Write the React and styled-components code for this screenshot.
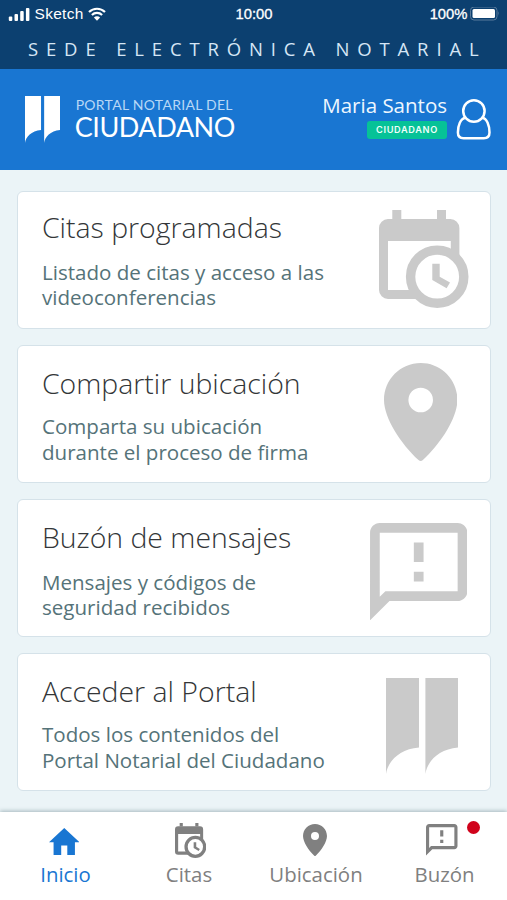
import React from "react";
import styled, { createGlobalStyle } from "styled-components";

const GlobalStyle = createGlobalStyle`
  * { box-sizing: border-box; }
  body { margin: 0; background: #ebf4f7; font-family: "Open Sans", "Noto Sans", sans-serif; }
`;

const Screen = styled.div`
  width: 507px;
  height: 900px;
  display: flex;
  flex-direction: column;
  overflow: hidden;
  background: #ebf4f7;
`;

const TopBar = styled.div`
  height: 69px;
  flex: none;
  background: #0c4070;
  color: #fff;
`;

const StatusBar = styled.div`
  height: 28px;
  display: grid;
  grid-template-columns: 1fr auto 1fr;
  align-items: center;
  padding: 0 7px 0 8px;
  font: 15.5px/28px "Liberation Sans", Arial, sans-serif;
`;

const StatusGroup = styled.div`
  display: flex;
  align-items: center;
  justify-content: ${(p) => (p.$end ? "flex-end" : "flex-start")};
  gap: ${(p) => (p.$end ? "2.5px" : "4.5px")};
  svg { display: block; flex: none; }
`;

const StatusText = styled.span`
  font-size: ${(p) => (p.$strong ? "14.8px" : "15.5px")};
  letter-spacing: ${(p) => p.$track || "0"};
  -webkit-text-stroke: ${(p) => (p.$strong ? "0.3px #fff" : "0")};
`;

const SiteTitle = styled.div`
  padding: 8px 0 0 28px;
  font-size: 18.5px;
  line-height: 26px;
  letter-spacing: 7.85px;
  white-space: nowrap;
  color: #d6e6f5;
`;

const Header = styled.header`
  height: 101px;
  flex: none;
  display: flex;
  align-items: flex-start;
  justify-content: space-between;
  padding: 27px 16px 0 24.5px;
  background: #1976d2;
  color: #fff;
`;

const Brand = styled.div`
  display: flex;
  gap: 15px;
  svg { display: block; }
`;

const BrandText = styled.div`
  font-family: Lato, "Open Sans", sans-serif;
  white-space: nowrap;
`;

const BrandSmall = styled.div`
  font-size: 14px;
  line-height: 18px;
  letter-spacing: 0.28px;
  padding-left: 1px;
  color: #b8d8f6;
`;

const BrandLarge = styled.div`
  font-size: 27px;
  line-height: 26px;
  letter-spacing: -0.45px;
`;

const User = styled.div`
  display: flex;
  gap: 9px;
`;

const UserInfo = styled.div`
  display: flex;
  flex-direction: column;
  align-items: flex-end;
`;

const UserName = styled.div`
  margin-top: -4px;
  font-size: 20.5px;
  line-height: 26px;
  white-space: nowrap;
  color: #eef6fe;
`;

const Role = styled.div`
  width: 80px;
  height: 18px;
  margin-top: 3px;
  border-radius: 3px;
  background: #06c297;
  font: 600 9.2px/18px "Inter", sans-serif;
  letter-spacing: 0.65px;
  text-align: center;
  color: #effffa;
`;

const UserIcon = styled.svg`
  display: block;
  margin-top: 3px;
`;

const Content = styled.main`
  flex: 1;
  display: flex;
  flex-direction: column;
  gap: 16.1px;
  padding: 21px 16px 0 17px;
`;

const Card = styled.section`
  height: 138px;
  flex: none;
  display: flex;
  justify-content: space-between;
  padding: 0 0 0 24px;
  background: #fff;
  border: 1.5px solid #d5e2e9;
  border-radius: 6px;
`;

const CardText = styled.div`
  padding-top: ${(p) => p.$top};
  white-space: nowrap;
`;

const CardTitle = styled.h2`
  margin: 0;
  font-size: 28.4px;
  line-height: 38px;
  font-weight: 300;
  color: #333638;
`;

const CardBody = styled.p`
  margin: ${(p) => p.$gap} 0 0;
  font-size: 20.55px;
  line-height: 25.5px;
  color: #557379;
`;

const CardArt = styled.div`
  width: 133px;
  display: flex;
  justify-content: center;
  padding-top: ${(p) => p.$top};
  padding-right: ${(p) => p.$right || "0"};
  color: #cacaca;
  svg { display: block; flex: none; }
`;

const Nav = styled.nav`
  height: 88px;
  flex: none;
  display: grid;
  grid-template-columns: 131px 116px 138px 119px;
  background: #fff;
  box-shadow: 0 -1px 4px rgba(60, 90, 100, 0.4);
`;

const NavItem = styled.a`
  position: relative;
  display: flex;
  flex-direction: column;
  align-items: center;
  color: ${(p) => (p.$active ? "#1976d2" : "#808080")};
`;

const NavIcon = styled.div`
  height: 48px;
  padding-top: ${(p) => p.$top};
  padding-left: ${(p) => p.$left || "0"};
  padding-right: ${(p) => p.$right || "0"};
  svg { display: block; }
`;

const NavLabel = styled.span`
  font-size: 20.4px;
  line-height: 28px;
`;

const Dot = styled.span`
  position: absolute;
  top: 9px;
  right: 24px;
  width: 13px;
  height: 13px;
  border-radius: 50%;
  background: #d0021b;
`;

const CalendarIcon = ({ w, h }) => (
  <svg width={w} height={h} viewBox="0 0 90 98" preserveAspectRatio="none" fill="currentColor">
    <path d="M13.3 10V0h9v10h35.7V0h9v10Z" />
    <path
      fillRule="evenodd"
      d="M9 9h62.4a9 9 0 0 1 9 9v30.5h-8.6V31H9v49h32v9H9a9 9 0 0 1-9-9V18a9 9 0 0 1 9-9Z"
    />
    <circle cx="58.2" cy="66.7" r="26.6" fill="#fff" stroke="currentColor" strokeWidth="9.4" />
    <path d="M53.3 53.7h7.4v13l10.3 5.9-3.4 5.6-14.3-8.1Z" />
  </svg>
);

const PinIcon = ({ w, h }) => (
  <svg width={w} height={h} viewBox="0 0 73.4 98" fill="currentColor">
    <path
      fillRule="evenodd"
      d="M36.7 0C16.4 0 0 16.4 0 37c0 18 17 44 34.500 60q2.200 2 4.400 0C56.400 81 73.400 55 73.400 37 73.400 16.400 57 0 36.700 0Zm0 24.700a12.300 12.300 0 1 1 0 24.600 12.300 12.300 0 0 1 0-24.600Z"
    />
  </svg>
);

const MessageIcon = ({ w, h }) => (
  <svg width={w} height={h} viewBox="2 2 20 20" fill="currentColor">
    <path d="M20 2H4c-1.1 0-1.99.9-1.99 2L2 22l4-4h14c1.1 0 2-.9 2-2V4c0-1.1-.9-2-2-2zm0 14H5.17l-.59.59-.58.58V4h16v12zm-9-4h2v2h-2zm0-6h2v4h-2z" />
  </svg>
);

const PortalIcon = ({ w, h }) => (
  <svg width={w} height={h} viewBox="0 0 72.4 96" preserveAspectRatio="none" fill="currentColor">
    <path d="M0 0h33v69.500C13 71 1.500 84 0 96ZM39.400 0h33v69.500c-20 1.500-31.500 14.500-33 26.500Z" />
  </svg>
);

const HomeIcon = ({ w, h }) => (
  <svg width={w} height={h} viewBox="2 3 20 17" preserveAspectRatio="none" fill="currentColor">
    <path d="M10 20v-6h4v6h5v-8h3L12 3 2 12h3v8z" />
  </svg>
);

const SignalIcon = () => (
  <svg width="22" height="13" viewBox="0 0 22 13" fill="#fff">
    <rect x="0.800" y="8.500" width="3.500" height="4.500" rx="1" />
    <rect x="6.500" y="6" width="3.500" height="7" rx="1" />
    <rect x="12.200" y="3" width="3.500" height="10" rx="1" />
    <rect x="17.900" y="0" width="3.500" height="13" rx="1" />
  </svg>
);

const WifiIcon = () => (
  <svg width="18" height="14" viewBox="0 0 18 14" fill="none" stroke="#fff" strokeWidth="2.200">
    <path d="M1 5a11.500 11.500 0 0 1 16 0" />
    <path d="M3.900 8a7.300 7.300 0 0 1 10.200 0" />
    <path d="M9 13.700 5.900 10.600a4.400 4.400 0 0 1 6.200 0Z" fill="#fff" stroke="none" />
  </svg>
);

const BatteryIcon = () => (
  <svg width="30" height="15" viewBox="0 0 30 15">
    <rect x="0.500" y="0" width="26.500" height="13" rx="3.500" fill="none" stroke="#587a9b" />
    <rect x="2.500" y="2" width="22.500" height="9" rx="1.500" fill="#fff" />
    <path d="M28 4.300q1.800 2.200 0 4.400Z" fill="#587a9b" />
  </svg>
);

const cards = [
  { title: "Citas programadas", body: ["Listado de citas y acceso a las", "videoconferencias"], art: <CalendarIcon w={90} h={98} />, top: "17.500px", right: "0", textTop: "16px", gap: "13.500px" },
  { title: "Compartir ubicación", body: ["Comparta su ubicación", "durante el proceso de firma"], art: <PinIcon w={73.4} h={98} />, top: "16.500px", right: "6px", textTop: "18px", gap: "12px" },
  { title: "Buzón de mensajes", body: ["Mensajes y códigos de", "seguridad recibidos"], art: <MessageIcon w={97.4} h={97.4} />, top: "22.500px", right: "10px", textTop: "18px", gap: "13.500px" },
  { title: "Acceder al Portal", body: ["Todos los contenidos del", "Portal Notarial del Ciudadano"], art: <PortalIcon w={72.4} h={96} />, top: "24px", right: "3.500px", textTop: "17.500px", gap: "12.500px" },
];

export default function App() {
  return (
    <Screen>
      <GlobalStyle />
      <TopBar>
        <StatusBar>
          <StatusGroup>
            <SignalIcon />
            <StatusText $track="0.300px">Sketch</StatusText>
            <WifiIcon />
          </StatusGroup>
          <StatusText $strong>10:00</StatusText>
          <StatusGroup $end>
            <StatusText $strong>100%</StatusText>
            <BatteryIcon />
          </StatusGroup>
        </StatusBar>
        <SiteTitle>SEDE ELECTRÓNICA NOTARIAL</SiteTitle>
      </TopBar>
      <Header>
        <Brand>
          <PortalIcon w={35.2} h={47} />
          <BrandText>
            <BrandSmall>PORTAL NOTARIAL DEL</BrandSmall>
            <BrandLarge>CIUDADANO</BrandLarge>
          </BrandText>
        </Brand>
        <User>
          <UserInfo>
            <UserName>Maria Santos</UserName>
            <Role>CIUDADANO</Role>
          </UserInfo>
          <UserIcon width="35" height="41" viewBox="0 0 35 41" fill="none" stroke="#fff" strokeWidth="2.500">
            <circle cx="17.900" cy="12" r="10.700" />
            <path d="M9.500 18.800C4.500 19.500 1.900 26.500 1.900 33.500c0 3.500 2.200 5.700 5.700 5.700h20.200c3.500 0 5.700-2.200 5.700-5.700 0-7-2.600-14-7.200-14.700" />
          </UserIcon>
        </User>
      </Header>
      <Content>
        {cards.map((c) => (
          <Card key={c.title}>
            <CardText $top={c.textTop}>
              <CardTitle>{c.title}</CardTitle>
              <CardBody $gap={c.gap}>
                {c.body[0]}
                <br />
                {c.body[1]}
              </CardBody>
            </CardText>
            <CardArt $top={c.top} $right={c.right}>{c.art}</CardArt>
          </Card>
        ))}
      </Content>
      <Nav>
        <NavItem $active>
          <NavIcon $top="15.500px" $right="3px"><HomeIcon w={30.5} h={27} /></NavIcon>
          <NavLabel>Inicio</NavLabel>
        </NavItem>
        <NavItem>
          <NavIcon $top="10.500px" $left="3px"><CalendarIcon w={31.5} h={35} /></NavIcon>
          <NavLabel>Citas</NavLabel>
        </NavItem>
        <NavItem>
          <NavIcon $top="12px" $right="3px"><PinIcon w={24} h={32} /></NavIcon>
          <NavLabel>Ubicación</NavLabel>
        </NavItem>
        <NavItem>
          <NavIcon $top="12px" $right="5px"><MessageIcon w={31.5} h={31.5} /></NavIcon>
          <NavLabel>Buzón</NavLabel>
          <Dot />
        </NavItem>
      </Nav>
    </Screen>
  );
}
